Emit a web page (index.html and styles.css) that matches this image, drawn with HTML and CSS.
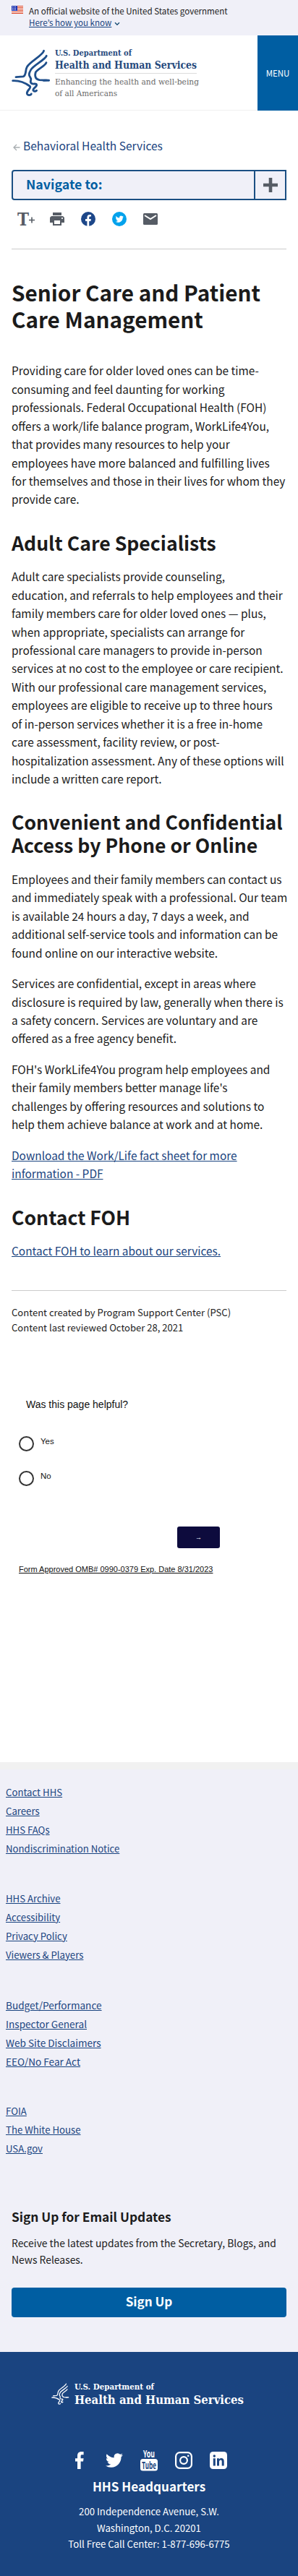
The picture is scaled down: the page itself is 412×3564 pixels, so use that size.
FILE: index.html
```html
<!DOCTYPE html>
<html lang="en">
<head>
<meta charset="utf-8">
<title>Senior Care and Patient Care Management</title>
<link rel="stylesheet" href="styles.css">
</head>
<body>
<svg class="defs" width="0" height="0"><symbol id="bird" viewBox="48 200 164 204"><g fill="none" stroke="currentColor" stroke-width="8.5" stroke-linecap="round" stroke-linejoin="round"><path d="M182 211C178 230 124 256 112 278C104 292 110 314 96 318L66 320"/><path d="M193 232C188 248 140 270 128 290C120 304 118 312 126 322C134 332 121 338 130 346C138 352 150 344 152 352C154 362 134 366 138 376C142 382 150 378 152 376"/><path d="M192 260C188 274 154 288 148 300C142 320 150 330 164 332L203 334"/><path d="M53 335C80 334 108 346 124 358C132 366 110 376 112 388C114 398 128 396 130 390"/></g><path fill="currentColor" d="M174 332q16-5 34 0q-14 9-30 6z"/></symbol></svg>
<div class="banner">
<svg class="flag" viewBox="0 0 16 11"><path fill="#fff" d="M0 0h16v11H0z"/><path stroke="#db3e1f" d="M0 .5h16M0 2.5h16M0 4.5h16M0 6.5h16M0 8.5h16M0 10.5h16"/><path fill="#1e33b1" d="M0 0h8v7H0z"/><path stroke="#fff" stroke-dasharray="1 1" d="M1 1.5h6M1 3.5h6M1 5.5h6"/></svg>
<div><div>An official website of the United States government</div><div><a>Here’s how you know</a> <svg class="chev" viewBox="0 0 8 6"><path d="M1 1.2l3 3 3-3" fill="none" stroke="#1b4f75" stroke-width="1.4"/></svg></div></div>
</div>
<header class="header">
<svg class="logo" viewBox="0 0 356 104"><use href="#bird" x="16" y="17.600" width="54.600" height="68" color="#1f4f8b"/><g class="serif bold" fill="#264a7d"><text x="76" y="28" font-size="11" textLength="106" lengthAdjust="spacingAndGlyphs">U.S. Department of</text><text x="76" y="46" font-size="14" textLength="196" lengthAdjust="spacingAndGlyphs">Health and Human Services</text></g><path d="M76 52.500h196" stroke="#ddd"/><g class="serif" fill="#6a6a6a"><text x="76" y="67.500" font-size="11.500" textLength="199" lengthAdjust="spacingAndGlyphs">Enhancing the health and well-being</text><text x="76" y="83.500" font-size="11.500" textLength="86" lengthAdjust="spacingAndGlyphs">of all Americans</text></g></svg>
<button class="menu">MENU</button>
</header>
<main>
<div class="crumb"><svg viewBox="0 0 12 12"><path d="M11.500 6H3M7 2L3 6l4 4" fill="none" stroke="#a9aeb1" stroke-width="1.300"/></svg><a>Behavioral Health Services</a></div>
<div class="nav"><span class="label">Navigate to:</span><span class="plus"><svg viewBox="0 0 20 20"><path d="M10 0v20M0 10h20" stroke="#565c65" stroke-width="4.600"/></svg></span></div>
<div class="tools">
<svg viewBox="0 0 26 20"><text class="serif bold" x="0" y="19" font-size="25" textLength="16" lengthAdjust="spacingAndGlyphs" fill="#565c65">T</text><path d="M20 7.500v8M16 11.500h8" stroke="#565c65" stroke-width="1.600"/></svg>
<svg viewBox="2 3 20 18"><path fill="#565c65" d="M19 8H5c-1.660 0-3 1.340-3 3v6h4v4h12v-4h4v-6c0-1.660-1.340-3-3-3zm-3 11H8v-5h8v5zm3-7c-.55 0-1-.45-1-1s.45-1 1-1 1 .45 1 1-.45 1-1 1zm-1-9H6v4h12V3z"/></svg>
<svg viewBox="0 0 20 20"><circle cx="10" cy="10" r="10" fill="#1d4789"/><path fill="#fff" d="M8.400 20v-7H6V10h2.400V7.800c0-2.500 1.400-3.800 3.600-3.800.9 0 2 .2 2 .2v2.300h-1.200c-1.200 0-1.600.7-1.600 1.500V10h2.700l-.5 3h-2.200v7z"/></svg>
<svg viewBox="0 0 20 20"><circle cx="10" cy="10" r="10" fill="#03a2ec"/><g transform="translate(4.600 4.500) scale(.47)"><path fill="#fff" d="M23.950 4.570a10 10 0 01-2.820.77 4.960 4.960 0 002.160-2.720c-.95.560-2.010.96-3.130 1.180a4.920 4.920 0 00-8.380 4.480C7.690 8.100 4.070 6.130 1.640 3.160a4.820 4.820 0 00-.67 2.480c0 1.700.87 3.200 2.190 4.080a4.900 4.900 0 01-2.230-.61v.06a4.920 4.920 0 003.950 4.830 5 5 0 01-2.210.08 4.940 4.940 0 004.600 3.420A9.870 9.870 0 010 19.540a14 14 0 007.550 2.210c9.050 0 14-7.500 14-13.980 0-.21 0-.42-.02-.63a9.940 9.940 0 002.420-2.570z"/></g></svg>
<svg viewBox="0 0 20 16"><rect width="20" height="16" rx="1.500" fill="#565c65"/><path d="M2 3l8 5 8-5" fill="none" stroke="#fff" stroke-width="2"/></svg>
</div>
<h1>Senior Care and Patient<br>Care Management</h1>
<p class="lead">Providing care for older loved ones can be time-<br>consuming and feel daunting for working<br>professionals. Federal Occupational Health (FOH)<br>offers a work/life balance program, WorkLife4You,<br>that provides many resources to help your<br>employees have more balanced and fulfilling lives<br>for themselves and those in their lives for whom they<br>provide care.</p>
<h2>Adult Care Specialists</h2>
<p>Adult care specialists provide counseling,<br>education, and referrals to help employees and their<br>family members care for older loved ones — plus,<br>when appropriate, specialists can arrange for<br>professional care managers to provide in-person<br>services at no cost to the employee or care recipient.<br>With our professional care management services,<br>employees are eligible to receive up to three hours<br>of in-person services whether it is a free in-home<br>care assessment, facility review, or post-<br>hospitalization assessment. Any of these options will<br>include a written care report.</p>
<h2>Convenient and Confidential<br>Access by Phone or Online</h2>
<p>Employees and their family members can contact us<br>and immediately speak with a professional. Our team<br>is available 24 hours a day, 7 days a week, and<br>additional self-service tools and information can be<br>found online on our interactive website.</p>
<p>Services are confidential, except in areas where<br>disclosure is required by law, generally when there is<br>a safety concern. Services are voluntary and are<br>offered as a free agency benefit.</p>
<p>FOH's WorkLife4You program help employees and<br>their family members better manage life's<br>challenges by offering resources and solutions to<br>help them achieve balance at work and at home.</p>
<p><a>Download the Work/Life fact sheet for more<br>information - PDF</a></p>
<h2>Contact FOH</h2>
<p><a>Contact FOH to learn about our services.</a></p>
<div class="meta">Content created by Program Support Center (PSC)<br>Content last reviewed October 28, 2021</div>
</main>
<form class="survey">
<div class="q">Was this page helpful?</div>
<label><i></i><span>Yes</span></label>
<label><i></i><span>No</span></label>
<button type="button">→</button>
<div class="omb"><a>Form Approved OMB# 0990-0379 Exp. Date 8/31/2023</a></div>
</form>
<section class="links">
<ul><li><a>Contact HHS</a></li><li><a>Careers</a></li><li><a>HHS FAQs</a></li><li><a>Nondiscrimination Notice</a></li></ul>
<ul><li><a>HHS Archive</a></li><li><a>Accessibility</a></li><li><a>Privacy Policy</a></li><li><a>Viewers &amp; Players</a></li></ul>
<ul class="wide"><li><a>Budget/Performance</a></li><li><a>Inspector General</a></li><li><a>Web Site Disclaimers</a></li><li><a>EEO/No Fear Act</a></li></ul>
<ul><li><a>FOIA</a></li><li><a>The White House</a></li><li><a>USA.gov</a></li></ul>
<div class="signup"><h3>Sign Up for Email Updates</h3>
<p>Receive the latest updates from the Secretary, Blogs, and<br>News Releases.</p>
<button>Sign Up</button></div>
</section>
<footer>
<svg class="flogo" viewBox="0 0 268 32"><use href="#bird" x="0" y="0" width="25" height="32" color="#fff"/><g class="serif bold" fill="#fff"><text x="32" y="9.500" font-size="11.500" textLength="110" lengthAdjust="spacingAndGlyphs">U.S. Department of</text><text x="32" y="30" font-size="17.500" textLength="234" lengthAdjust="spacingAndGlyphs">Health and Human Services</text></g></svg>
<div class="social">
<svg viewBox="0 0 24 28"><path fill="#fff" d="M9 26V15.500H6v-4.200h3V8.200C9 4.200 10.600 2 14.600 2h3v4.200h-2c-1.500 0-2 .6-2 2v3.100h4l-.6 4.200h-3.400V26z"/></svg>
<svg viewBox="0 -2 24 28"><path fill="#fff" d="M23.950 4.570a10 10 0 01-2.820.77 4.960 4.960 0 002.160-2.720c-.95.560-2.010.96-3.130 1.180a4.920 4.920 0 00-8.380 4.480C7.690 8.100 4.070 6.130 1.640 3.160a4.820 4.820 0 00-.67 2.480c0 1.700.87 3.200 2.190 4.080a4.900 4.900 0 01-2.230-.61v.06a4.920 4.920 0 003.950 4.830 5 5 0 01-2.210.08 4.940 4.940 0 004.600 3.420A9.870 9.870 0 010 19.540a14 14 0 007.550 2.210c9.050 0 14-7.500 14-13.980 0-.21 0-.42-.02-.63a9.940 9.940 0 002.420-2.570z"/></svg>
<svg class="yt" viewBox="0 0 24 28"><text x="4" y="10.300" font-size="13.500" textLength="16" lengthAdjust="spacingAndGlyphs" fill="#fff">You</text><rect y="12" width="24" height="16.500" rx="3.500" fill="#fff"/><text x="2" y="25.500" font-size="13.500" textLength="20" lengthAdjust="spacingAndGlyphs" fill="#1a4480">Tube</text></svg>
<svg viewBox="0 0 24 28" fill="none" stroke="#fff" stroke-width="2.200"><rect x="1.100" y="3.100" width="21.800" height="21.800" rx="5.500"/><circle cx="12" cy="14" r="4.900"/><circle cx="18.200" cy="7.800" r="1.300" fill="#fff" stroke="none"/></svg>
<svg viewBox="0 0 24 28"><rect y="2" width="24" height="24" rx="4.500" fill="#fff"/><path fill="#1a4480" d="M4.800 11.200h3v10.300h-3zM10 11.200h2.900v1.500c.6-1 1.700-1.700 3.100-1.700 2.600 0 3.700 1.600 3.700 4.300v6.200h-3v-5.700c0-1.400-.4-2.200-1.600-2.200s-2.100.9-2.100 2.400v5.500h-3z"/><circle cx="6.300" cy="8" r="1.750" fill="#1a4480"/></svg>
</div>
<h3>HHS Headquarters</h3>
<address>200 Independence Avenue, S.W.<br>Washington, D.C. 20201<br>Toll Free Call Center: 1-877-696-6775</address>
</footer>
</body>
</html>
```
FILE: styles.css
```css
* { box-sizing: border-box; }
body { margin: 0; width: 412px; height: 3564px; background: #fff; color: #1b1b1b; font-family: "Noto Sans CJK KR", "Noto Sans", sans-serif; font-size: 15.43px; line-height: 25.43px; white-space: nowrap; overflow-x: hidden; }
h1, h2, h3, p, ul { margin: 0; padding: 0; }
button { border: 0; font-family: inherit; padding: 0; }
a { color: #1a4480; text-decoration: underline; }
ul { list-style: none; }
svg { overflow: visible; }
.serif { font-family: "DejaVu Serif Condensed", "DejaVu Serif", serif; }
.bold { font-weight: bold; }
.defs { display: block; height: 0; }
.banner { display: flex; gap: 8px; height: 49px; padding: 7px 16px 0; background: #f0f0f8; font-size: 11.58px; line-height: 16.4px; }
.flag { width: 16px; height: 11px; margin-top: 1px; }
.chev { width: 8px; height: 6px; margin-left: 1px; }
.header { display: flex; height: 104px; border-bottom: 1px solid #f0f0f0; }
.logo { width: 356px; height: 104px; }
.menu { width: 56px; height: 104px; background: #005ea2; color: #fff; font-size: 11.5px; }
main { padding: 0 16px; }
.crumb { display: flex; align-items: center; gap: 4px; height: 26px; margin-top: 36px; font-size: 15.55px; }
.crumb svg { width: 12px; height: 12px; margin-top: 3px; }
.crumb a { text-decoration: none; }
.nav { display: flex; height: 42px; margin-top: 20px; border: 2px solid #1b4f83; border-radius: 4px 0 0 4px; background: #f0f0f8; }
.nav .label { flex: 1; padding-left: 18px; font-size: 17.8px; font-weight: bold; line-height: 34.4px; color: #005ea2; }
.plus { display: flex; align-items: center; justify-content: center; width: 43px; border-left: 2px solid #1b4f83; }
.plus svg { width: 20px; height: 20px; }
.tools { display: flex; align-items: center; height: 68px; padding: 0 0 15px 8px; border-bottom: 1px solid #ccc; }
.tools svg { width: 20px; height: 20px; margin-right: 23px; }
.tools svg:first-child { width: 26px; margin-right: 19px; }
.tools svg:last-child { height: 16px; }
h1 { margin-top: 40.5px; font-size: 29.7px; line-height: 37.4px; }
.lead { margin-top: 40px; }
h2 { margin-top: 31px; font-size: 26.6px; line-height: 32px; margin-bottom: 18.4px; }
p + p { margin-top: 17.1px; }
.meta { margin-top: 41px; padding-top: 19.8px; border-top: 1px solid #ccc; font-size: 13.05px; line-height: 21px; }
.survey { font-family: "Liberation Sans", sans-serif; color: #111; display: flex; flex-direction: column; padding: 81px 26px 0; height: 590.7px; }
.q { padding-left: 10px; font-size: 14px; line-height: 30px; margin-bottom: 29px; }
.survey label { display: flex; gap: 9px; height: 48px; font-size: 11.5px; line-height: 14px; }
.survey i { width: 21px; height: 21px; border: 2px solid #333; border-radius: 50%; }
.survey button { width: 59px; height: 30px; margin: 29px 0 0 219px; background: #0d0b3d; color: #fff; border-radius: 3px; font-size: 9px; }
.omb { margin-top: 19px; font-size: 11px; line-height: 20px; }
.omb a { color: #111; }
.links { height: 816px; padding: 18.8px 8px 0; background: #f0f0f8; border-top: 10px solid #f1f1f1; font-size: 13.2px; line-height: 26px; }
.links ul { height: 147.2px; }
.wide { font-size: 13.6px; }
.signup { padding: 0 8px; }
.signup h3 { font-size: 17.3px; line-height: 24px; margin-top: -1px; }
.signup p { font-size: 13.9px; line-height: 22.65px; margin-top: 13.4px; }
.signup button { width: 100%; height: 41px; margin-top: 27.6px; padding-bottom: 2px; border-radius: 4px; background: #005ea2; color: #fff; font-size: 17.1px; font-weight: bold; line-height: 38px; }
footer { height: 310px; padding-top: 42px; background: #1a4480; color: #fff; text-align: center; }
.flogo { display: block; width: 268px; height: 32px; margin-left: 71px; }
.social { display: flex; justify-content: center; gap: 24px; height: 28px; margin-top: 62px; }
.social svg { width: 24px; height: 28px; }
.yt { font-weight: bold; }
footer h3 { margin-top: 8.5px; font-size: 17.1px; line-height: 26px; }
address { margin-top: 11.5px; font-style: normal; font-size: 13.2px; line-height: 22.6px; }
```
